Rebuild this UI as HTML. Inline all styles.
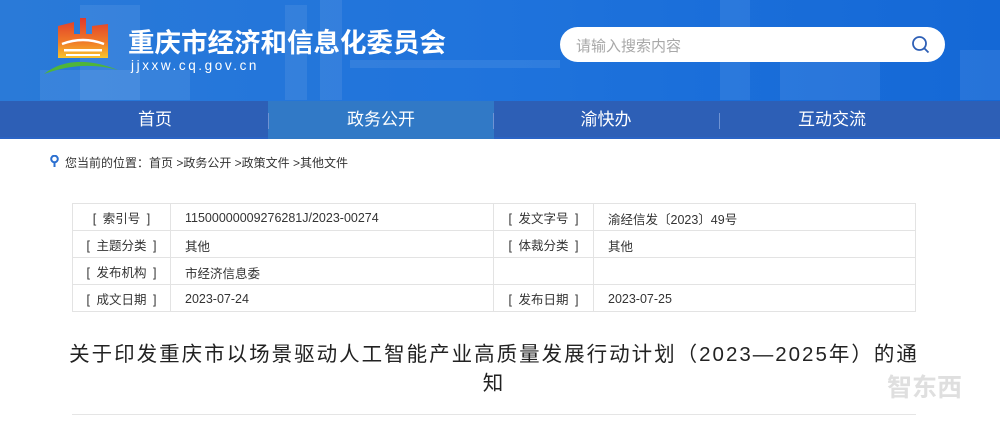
<!DOCTYPE html>
<html><head><meta charset="utf-8"><style>
*{margin:0;padding:0;box-sizing:border-box}
body{width:1000px;height:426px;overflow:hidden;background:#fff;font-family:"Liberation Sans","Noto Sans CJK SC",sans-serif;position:relative}
.hdr{position:absolute;left:0;top:0;width:1000px;height:101px;background:linear-gradient(90deg,#2a7ad8,#1f73dc 50%,#1468d6);overflow:hidden}
.sil{position:absolute;background:rgba(255,255,255,0.08)}
.title{position:absolute;left:128px;top:21px;color:#fff;font-size:26.5px;font-weight:bold}
.url{position:absolute;left:131px;top:58px;color:#fff;font-size:13.5px;letter-spacing:2.6px}
.search{position:absolute;left:560px;top:27px;width:385px;height:35px;background:#fff;border-radius:18px}
.search span{position:absolute;left:16px;top:8px;color:#a8a8a8;font-size:15px}
.nav{position:absolute;left:0;top:101px;width:1000px;height:38px;background:#2d5fb6;border-bottom:2px solid #2a63c4}
.nav div{position:absolute;top:0;height:38px;line-height:38px;color:#fff;font-size:17px;text-align:center;width:226px}
.sep{position:absolute;top:12px;width:1px;height:16px;background:#6f93d3}
.bc{position:absolute;left:65px;top:154px;font-size:12px;color:#333}
table{position:absolute;left:72px;top:203px;width:844px;border-collapse:collapse;font-size:12.5px;color:#333}
td{border:1px solid #e3e3e3;height:27px;padding:2px 0 0 14px;vertical-align:middle}
td.l{text-align:center;padding:0;width:98px;word-spacing:3px}
h1{position:absolute;left:20px;top:340px;width:948px;text-align:center;font-size:20.5px;font-weight:normal;color:#222;line-height:29px;letter-spacing:2px}
.line{position:absolute;left:72px;top:414px;width:844px;height:1px;background:#e5e5e5}
</style></head><body>
<div class="hdr">
<div class="sil" style="left:80px;top:5px;width:60px;height:95px"></div>
<div class="sil" style="left:40px;top:70px;width:150px;height:30px"></div>
<div class="sil" style="left:285px;top:5px;width:22px;height:95px"></div>
<div class="sil" style="left:320px;top:0;width:22px;height:100px"></div>
<div class="sil" style="left:350px;top:60px;width:210px;height:8px"></div>
<div class="sil" style="left:720px;top:0;width:30px;height:100px"></div>
<div class="sil" style="left:780px;top:60px;width:100px;height:40px"></div>
<div class="sil" style="left:960px;top:50px;width:40px;height:50px"></div>
<svg style="position:absolute;left:42px;top:14px" width="80" height="62" viewBox="0 0 80 62">
<defs><linearGradient id="g" x1="0" y1="0" x2="0" y2="1"><stop offset="0" stop-color="#e03a2a"/><stop offset="0.6" stop-color="#f07a28"/><stop offset="1" stop-color="#f9c42a"/></linearGradient></defs>
<path d="M16 12 L32 8 L32 20 L38 20 L38 4 L44 4 L44 20 L50 20 L50 12 L66 10 L66 44 L16 44 Z" fill="url(#g)"/>
<path d="M20 30 Q41 22 62 30" stroke="#fff" stroke-width="2.5" fill="none"/>
<rect x="22" y="35" width="38" height="2.5" fill="#fff"/><rect x="24" y="40" width="34" height="2" fill="#fff"/>
<path d="M2 60 Q30 38 76 56 Q40 46 2 60Z" fill="#4fb53a"/>
</svg>
<div class="title">重庆市经济和信息化委员会</div>
<div class="url">jjxxw.cq.gov.cn</div>
<div class="search"><span>请输入搜索内容</span>
<svg style="position:absolute;left:351px;top:8px" width="20" height="20" viewBox="0 0 20 20"><circle cx="8.5" cy="8.5" r="6.5" fill="none" stroke="#2d5fb6" stroke-width="1.8"/><path d="M13.5 13.5 L17.5 17.5" stroke="#2d5fb6" stroke-width="1.8"/></svg></div>
</div>
<div class="nav">
<div style="left:268px;width:226px;background:#3179c6"></div>
<div style="left:42px">首页</div>
<div style="left:268px">政务公开</div>
<div style="left:493px">渝快办</div>
<div style="left:719px">互动交流</div>
<span class="sep" style="left:268px"></span><span class="sep" style="left:493px"></span><span class="sep" style="left:719px"></span>
</div>
<svg style="position:absolute;left:50px;top:155px" width="9" height="12" viewBox="0 0 9 12"><circle cx="4.5" cy="4" r="3.3" fill="none" stroke="#2a6fd0" stroke-width="2"/><path d="M4.5 7 L4.5 12" stroke="#2a6fd0" stroke-width="2"/></svg>
<div class="bc">您当前的位置：首页 &gt;政务公开 &gt;政策文件 &gt;其他文件</div>
<table>
<tr><td class="l">[ 索引号 ]</td><td style="width:323px">11500000009276281J/2023-00274</td><td class="l" style="width:100px">[ 发文字号 ]</td><td>渝经信发〔2023〕49号</td></tr>
<tr><td class="l">[ 主题分类 ]</td><td>其他</td><td class="l">[ 体裁分类 ]</td><td>其他</td></tr>
<tr><td class="l">[ 发布机构 ]</td><td>市经济信息委</td><td class="l"></td><td></td></tr>
<tr><td class="l">[ 成文日期 ]</td><td>2023-07-24</td><td class="l">[ 发布日期 ]</td><td>2023-07-25</td></tr>
</table>
<h1>关于印发重庆市以场景驱动人工智能产业高质量发展行动计划（2023—2025年）的通<br>知</h1>
<div class="line"></div>
<div style="position:absolute;left:887px;top:368px;color:rgba(215,215,215,0.8);font-size:25px;font-weight:bold">智东西</div>
</body></html>
